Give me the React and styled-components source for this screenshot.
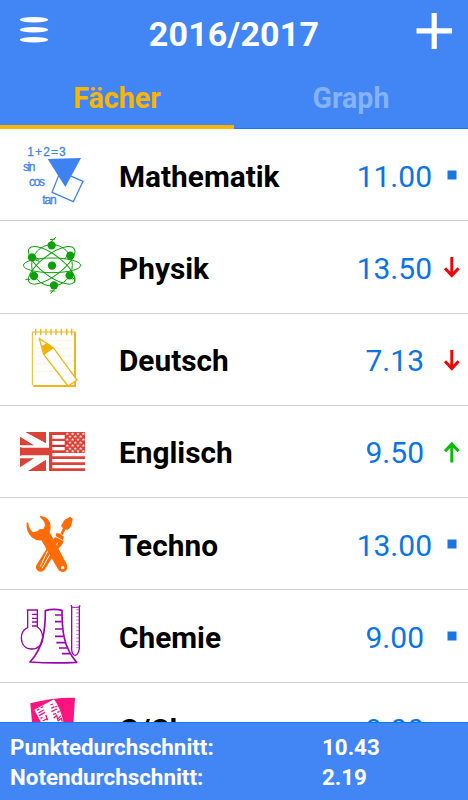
import React from "react";
import styled, { createGlobalStyle } from "styled-components";

const GlobalStyle = createGlobalStyle`
  * { box-sizing: border-box; }
  body { margin: 0; background: #fff; font-family: Roboto, "Liberation Sans", sans-serif; }
`;

const Screen = styled.div`
  width: 468px;
  height: 800px;
  display: flex;
  flex-direction: column;
  overflow: hidden;
  background: #fff;
`;

const Header = styled.header`
  flex: 0 0 68px;
  display: grid;
  grid-template-columns: 68px 1fr 68px;
  align-items: center;
  background: #4286f5;
`;

const Title = styled.h1`
  margin: 0;
  text-align: center;
  color: #fff;
  font-size: 34px;
  font-weight: 700;
  line-height: 68px;
  letter-spacing: 0.2px;
`;

const HeaderButton = styled.button`
  width: 68px;
  height: 68px;
  padding: 0;
  border: 0;
  background: none;
  svg { display: block; }
`;

const Tabs = styled.nav`
  flex: 0 0 61px;
  display: grid;
  grid-template-columns: 234px 234px;
  background: #4286f5;
`;

const Tab = styled.button`
  padding: 4px 0 0;
  border: 0;
  border-bottom: ${(p) => (p.$active ? "4px solid #fbb500" : "1px solid #1a78ee")};
  padding-bottom: ${(p) => (p.$active ? 0 : 3)}px;
  background: none;
  color: ${(p) => (p.$active ? "#fbb500" : "#86b2fa")};
  font-family: inherit;
  font-size: 28.6px;
  font-weight: 700;
  line-height: 53px;
`;

const List = styled.main`
  flex: 1 1 0;
  min-height: 0;
  overflow: hidden;
`;

const Row = styled.div`
  height: 92.25px;
  display: grid;
  grid-template-columns: 90px 1fr 120px 36px;
  padding-left: 10px;
  align-items: center;
  border-bottom: 1px solid #cfcfcf;
`;

const SubjectIcon = styled.svg`
  display: block;
  width: 90px;
  height: 92px;
  align-self: start;
`;

const Name = styled.span`
  padding: 3px 0 0 19px;
  color: #000;
  font-size: 29.8px;
  font-weight: 700;
  line-height: 40px;
  white-space: nowrap;
`;

const Score = styled.span`
  padding-top: 3px;
  padding-right: ${(p) => (p.$wide ? 0 : 8)}px;
  text-align: right;
  color: #0b74e5;
  font-size: 30px;
  line-height: 40px;
`;

const TrendIcon = styled.svg`
  display: block;
  width: 36px;
  height: 40px;
`;

const Summary = styled.footer`
  flex: 0 0 78px;
  display: grid;
  grid-template-columns: 312px 1fr;
  grid-auto-rows: 29.5px;
  align-content: start;
  padding: 10px 10px 0;
  border-top: 1px solid #0b7bf2;
  background: #4286f5;
  color: #fff;
  font-size: 22.35px;
  font-weight: 700;
  line-height: 29.5px;
`;

const MathArt = () => (
  <g transform="translate(0 18)" fill="#3d82f0">
    <g fontFamily="Liberation Sans, sans-serif" fontSize="36" stroke="#3d82f0" strokeWidth="0.8">
      <text x="52" y="63" textLength="115">1+2=3</text>
      <text x="39" y="107" textLength="37">sin</text>
      <text x="57" y="153" textLength="48">cos</text>
      <text x="97" y="206" textLength="43">tan</text>
    </g>
    <path d="M151 109 219 139 190 200 126 172Z" fill="none" stroke="#3d82f0" strokeWidth="4" />
    <path d="M113 72 213 69 166 156Z" />
  </g>
);

const PhysicsArt = () => (
  <g transform="translate(0 20)" fill="#0da108" stroke="#0da108">
    <g fill="none" strokeWidth="3">
      <ellipse cx="126" cy="113" rx="86" ry="22" />
      <ellipse cx="126" cy="113" rx="61" ry="62" />
      <ellipse cx="125" cy="113" rx="84" ry="31" transform="rotate(37 125 113)" />
      <ellipse cx="125" cy="113" rx="84" ry="31" transform="rotate(-37 125 113)" />
      <path d="M120 36 136 34M123 42 138 28M119 190 136 190M121 198 133 185M46 155 60 155M76 90 88 95M76 97 88 101M173 82 163 95M187 155 194 150 194 165" />
    </g>
    <g stroke="none">
      {[[125, 53], [66, 89], [181, 84], [126, 114], [72, 145], [179, 143], [132, 173]].map(([x, y]) => (
        <circle key={`${x}-${y}`} cx={x} cy={y} r="12.5" />
      ))}
    </g>
  </g>
);

const GermanArt = () => (
  <g transform="translate(0 19)" stroke="#f1b51c" fill="none">
    <path d="M80 61H187M80 84H187M80 107H187M80 130H187M80 153H187" stroke="#fcf0c9" strokeWidth="2" />
    <path d="M194 35H67V195" strokeWidth="3" />
    <path d="M195 34V197H70" strokeWidth="6" />
    <path d="M77 25V45M92 25V45M108 25V45M123 25V45M138 25V45M154 25V45M170 25V45M185 25V45" strokeWidth="4" />
    <path d="M88 55 130 82 201 179 174 197 101 102Z" fill="#fff" strokeWidth="4" />
    <path d="M95 77 112 68 131 83 103 104Z" fill="#f1b100" stroke="none" />
  </g>
);

const EnglishArt = () => (
  <g transform="translate(0 27)">
    <path d="M30 51H225V168H30Z" fill="#dc4238" />
    <g fill="#fff">
      <path d="M30 51H46L108 85V51H117V98H30V91H72L30 65Z" />
      <path d="M30 121H117V168H108V134L54 168H30V157L72 130H30Z" />
      <path d="M127 60H164V71H127ZM127 78H164V89H127ZM127 96H164V106H127Z" />
      <path d="M127 114H225V124H127ZM127 132H225V142H127ZM127 150H225V160H127Z" />
      <path d="M30 97H34V122H30Z" fill="#dc4238" />
    </g>
    <path d="M127 91H164V95H127Z" fill="#bd2c25" />
    <g fill="#ffe0dc">
      {[56, 64, 73, 82, 91, 100, 108].map((y, row) =>
        [172, 188, 204, 220].map((x) => {
          const cx = row % 2 ? x + 8 : x;
          return cx < 224 ? (
            <path key={`${cx}-${y}`} d={`M${cx} ${y - 4}l1.5 2.8 3.5.3-2.6 2.2.8 3.7-3.2-2-3.2 2 .8-3.7-2.6-2.2 3.5-.3z`} />
          ) : null;
        })
      )}
    </g>
  </g>
);

const TechnoArt = () => (
  <g transform="translate(0 21)" fill="#ff6b05">
    <path d="M181 35 188 41 184 63 173 75 167 73 158 90 151 86 159 69 153 62 164 44Z" />
    <path d="M139 84Q151 84 162 96L158 105 137 93Z" />
    <path d="M136 96 161 108Q158 122 143 132L104 194Q96 204 84 198 75 191 79 181L120 115Z" />
    <path d="M119 125 91 184M130 130 96 190M132 109 128 119M143 113 137 125" fill="none" stroke="#fff" strokeWidth="3" />
    <path d="M90 33Q110 34 119 50 125 64 119 82L170 177Q176 191 166 199 155 205 145 194L94 106Q78 108 65 97 47 79 50 52L55 54Q57 72 69 82L84 78Q85 71 101 71L105 61Q103 46 90 37Z" />
    <circle cx="158" cy="188" r="5" fill="#fff" />
  </g>
);

const ChemistryArt = () => (
  <g transform="translate(0 14)" fill="none" stroke="#9b04ac" strokeWidth="4" strokeLinejoin="round">
    <path d="M50 46H84M53 47V99Q34 107 34 130C35 152 48 163 65 163 84 163 98 149 98 131 98 112 90 102 82 97V47M66 59H82M66 71H82M66 82H82M66 94H82" />
    <path d="M106 48Q130 41 156 47C156 104 159 156 200 203Q130 207 60 202C102 158 106 99 106 48Z" strokeWidth="5" />
    <path d="M135 61H155M135 81H155M135 103H156M135 125H159M139 144H166M147 160H171M156 177H180" strokeWidth="5" />
    <path d="M183 31 185 36V166Q187 182 196 182 204 181 208 162V37L210 32" strokeWidth="4" />
    <path d="M185 37Q196 40 208 37" strokeWidth="3" />
    <path d="M198 45H207M198 55H207M198 66H207M198 76H207M198 87H207M198 97H207M198 108H207M198 119H207M198 130H207M198 141H207M198 151H207M198 159H206" strokeWidth="1.5" />
  </g>
);

const HistoryArt = () => (
  <g transform="translate(-30 -8)">
    <path d="M91 69Q153 51 225 52L219 150H98Z" fill="#ff147f" />
    <path d="M103 88 162 57Q186 90 194 145H133Z" fill="#fff" />
    <path d="M111 90 118 86M122 83 130 79M115 98 131 89M117 106 135 96M121 114 128 111M128 122 142 115M151 74 159 71M154 84 163 79M165 80 172 77M154 94 171 86M159 103 168 99M172 96 179 93M161 114 170 105 173 117 182 106M173 123 184 114 187 124M137 103 143 120" fill="none" stroke="#ff147f" strokeWidth="4" />
  </g>
);

const Trend = ({ kind }) => (
  <TrendIcon viewBox="0 0 36 40" aria-label={kind}>
    {kind === "same" && <path d="M15.5 15.5h9v9h-9z" fill="#1976df" />}
    {kind === "down" && <path d="M19.8 10V29.5M13 21.3 19.8 28.5 26.6 21.3" fill="none" stroke="#ed0505" strokeWidth="3" />}
    {kind === "up" && <path d="M19.8 30.5V11.5M13 19.3 19.8 12 26.6 19.3" fill="none" stroke="#05bd05" strokeWidth="3" />}
  </TrendIcon>
);

const subjects = [
  { name: "Mathematik", score: "11.00", trend: "same", Art: MathArt },
  { name: "Physik", score: "13.50", trend: "down", Art: PhysicsArt },
  { name: "Deutsch", score: "7.13", trend: "down", Art: GermanArt },
  { name: "Englisch", score: "9.50", trend: "up", Art: EnglishArt },
  { name: "Techno", score: "13.00", trend: "same", Art: TechnoArt },
  { name: "Chemie", score: "9.00", trend: "same", Art: ChemistryArt },
  { name: "G/Ch", score: "9.00", trend: "same", Art: HistoryArt },
];

export default function App() {
  return (
    <Screen>
      <GlobalStyle />
      <Header>
        <HeaderButton aria-label="Menü">
          <svg width="68" height="68" fill="#fff">
            <ellipse cx="34" cy="19.8" rx="14.2" ry="2.8" />
            <ellipse cx="34" cy="29.8" rx="14.2" ry="2.8" />
            <ellipse cx="34" cy="39.8" rx="14.2" ry="2.8" />
          </svg>
        </HeaderButton>
        <Title>2016/2017</Title>
        <HeaderButton aria-label="Hinzufügen">
          <svg width="68" height="68">
            <path d="M34.2 13V49M16.5 30.8H52" stroke="#fff" strokeWidth="5.2" />
          </svg>
        </HeaderButton>
      </Header>
      <Tabs>
        <Tab $active>Fächer</Tab>
        <Tab>Graph</Tab>
      </Tabs>
      <List>
        {subjects.map(({ name, score, trend, Art }, i) => (
          <Row key={i}>
            <SubjectIcon viewBox="0 0 270 276" aria-hidden="true"><Art /></SubjectIcon>
            <Name>{name}</Name>
            <Score $wide={score.length > 4}>{score}</Score>
            <Trend kind={trend} />
          </Row>
        ))}
      </List>
      <Summary>
        <span>Punktedurchschnitt:</span><span>10.43</span>
        <span>Notendurchschnitt:</span><span>2.19</span>
      </Summary>
    </Screen>
  );
}
